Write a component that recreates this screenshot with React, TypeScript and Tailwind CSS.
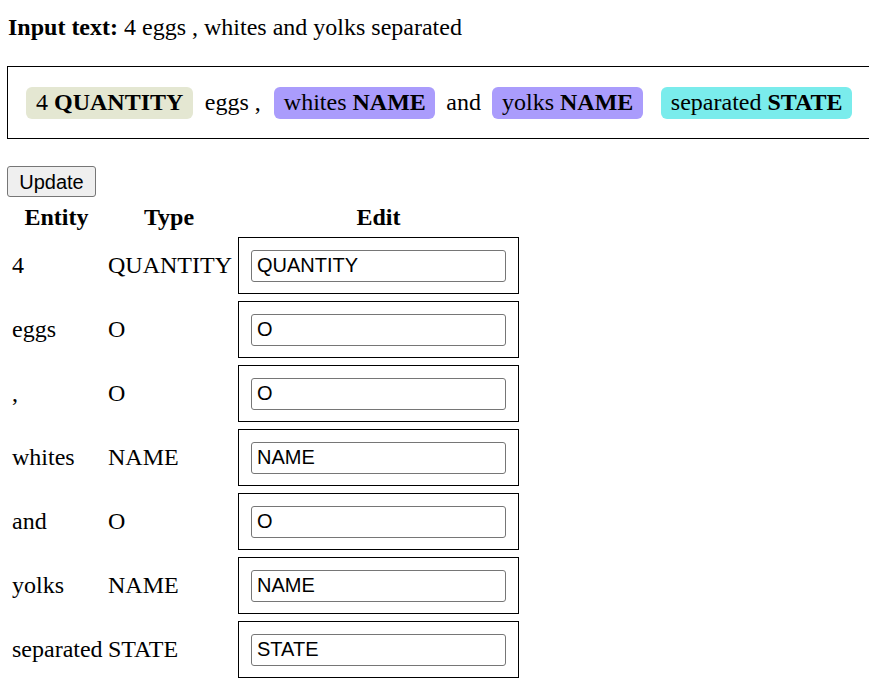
import React from "react";

type Tok = { text: string; label?: string; color?: string; ml: number };

const tokens: Tok[] = [
  { text: "4", label: "QUANTITY", color: "bg-[#e4e7d2]", ml: 18 },
  { text: "eggs ,", ml: 12 },
  { text: "whites", label: "NAME", color: "bg-[#aa9cfc]", ml: 13 },
  { text: "and", ml: 11 },
  { text: "yolks", label: "NAME", color: "bg-[#aa9cfc]", ml: 11 },
  { text: "separated", label: "STATE", color: "bg-[#7aecec]", ml: 18 },
];

const rows: [string, string][] = [
  ["4", "QUANTITY"],
  ["eggs", "O"],
  [",", "O"],
  ["whites", "NAME"],
  ["and", "O"],
  ["yolks", "NAME"],
  ["separated", "STATE"],
];

export default function App() {
  return (
    <div className="w-[869px] h-[693px] overflow-hidden bg-white text-black font-['Liberation_Serif',serif] text-[24px] leading-[27px]">
      <div className="pt-[14px] pl-[8px] h-[41px]">
        <b>Input text:</b> 4 eggs , whites and yolks separated
      </div>
      <div className="mt-[25px] ml-[7px] h-[73px] border border-r-0 border-black flex items-center">
        {tokens.map((t, i) =>
          t.label ? (
            <span
              key={i}
              style={{ marginLeft: t.ml }}
              className={`${t.color} shrink-0 whitespace-nowrap rounded-[6px] pl-[10px] pr-[9.5px] h-[32px] flex items-center`}
            >
              {t.text}&nbsp;<b>{t.label}</b>
            </span>
          ) : (
            <span key={i} style={{ marginLeft: t.ml }} className="shrink-0 whitespace-nowrap">
              {t.text}
            </span>
          )
        )}
      </div>
      <div className="mt-[27px] pl-[7px]">
        <button className="h-[31px] w-[89px] border border-[#767676] bg-[#efefef] rounded-[3px] font-['Liberation_Sans',Arial,sans-serif] text-[20px] leading-none text-black">
          Update
        </button>
      </div>
      <div className="mt-[7px] pl-[8px] grid grid-cols-[97px_125px_281px] h-[27px]">
        <div className="font-bold text-center">Entity</div>
        <div className="font-bold text-center ml-[3px]">Type</div>
        <div className="font-bold text-center ml-[16px]">Edit</div>
      </div>
      <div className="mt-[6px] pl-[8px] flex flex-col gap-[7px]">
        {rows.map(([e, t], i) => (
          <div key={i} className="flex items-center h-[57px]">
            <div className="w-[97px] pl-[4px] whitespace-nowrap">{e}</div>
            <div className="w-[125px] ml-[3px] whitespace-nowrap">{t}</div>
            <div className="ml-[5px] w-[281px] h-[57px] border border-black flex items-center pl-[12px]">
              <input
                readOnly
                value={t}
                className="w-[255px] h-[32px] border border-[#767676] rounded-[3px] px-[5px] font-['Liberation_Sans',Arial,sans-serif] text-[20px] text-black outline-none"
              />
            </div>
          </div>
        ))}
      </div>
    </div>
  );
}
